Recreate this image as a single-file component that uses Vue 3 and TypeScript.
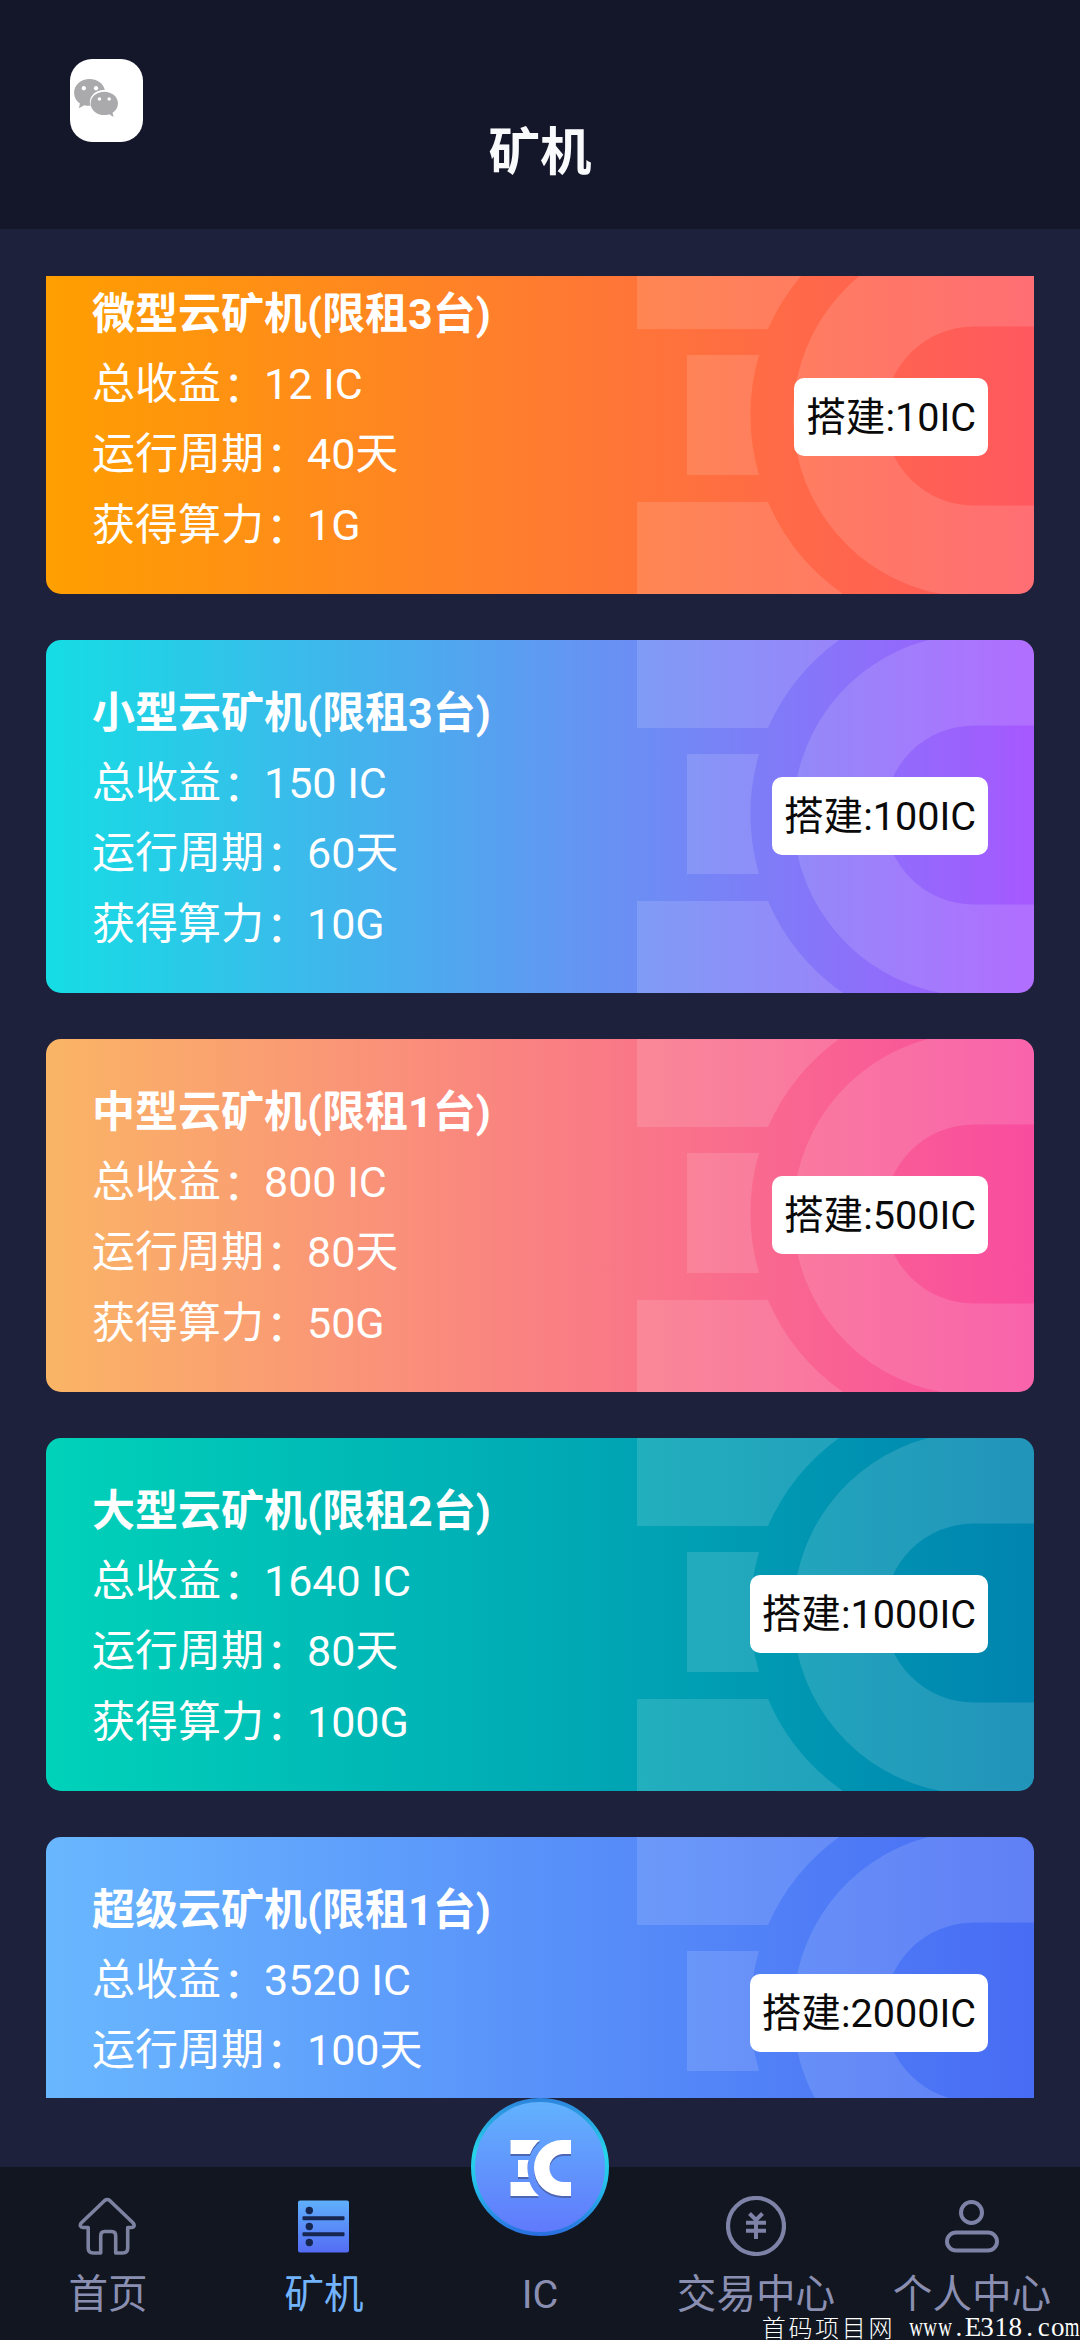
<script setup lang="ts">
interface Miner {
  name: string
  income: string
  days: number
  power?: string
  price: number
  from: string
  to: string
}

const miners: Miner[] = [
  { name: '微型云矿机(限租3台)', income: '12', days: 40, power: '1G', price: 10, from: '#ff9f00', to: '#ff585f' },
  { name: '小型云矿机(限租3台)', income: '150', days: 60, power: '10G', price: 100, from: '#15dde4', to: '#a658ff' },
  { name: '中型云矿机(限租1台)', income: '800', days: 80, power: '50G', price: 500, from: '#fab565', to: '#f94c9f' },
  { name: '大型云矿机(限租2台)', income: '1640', days: 80, power: '100G', price: 1000, from: '#00d2b9', to: '#0084b0' },
  { name: '超级云矿机(限租1台)', income: '3520', days: 100, price: 2000, from: '#69b7ff', to: '#486cf4' },
]

const siteName = '首码项目网'
const siteUrl = 'www.E318.com'
</script>

<template>
  <div class="app">
    <header class="header">
      <div class="chat">
        <svg width="45" height="39" viewBox="0 0 46 40">
          <path
            fill="#aaaaac"
            d="M16 0C7 0 0 6.200 0 14c0 4.800 2.300 8.600 6 11l-1 5 5.500-3.200c2 .6 4 .9 6.500.7C14 19 21 11 31.500 11.200 30 4.500 23.500 0 16 0z"
          />
          <path
            fill="#aaaaac"
            d="M31 13c-7.800 0-14 5.200-14 12s6.200 12 14 12c1.800 0 3.500-.3 5-.9l4.500 2.900-1-4.500c3.400-2.200 5.500-5.500 5.500-9.500 0-6.800-6.200-12-14-12z"
          />
          <g fill="#fff">
            <circle cx="10" cy="9.500" r="2.200" />
            <circle cx="22.500" cy="9.500" r="2.200" />
            <circle cx="26" cy="20.500" r="1.800" />
            <circle cx="36" cy="20.500" r="1.800" />
          </g>
        </svg>
      </div>
      <h1 class="title">矿机</h1>
    </header>

    <main class="main">
      <div class="viewport">
        <div class="list">
          <section
            v-for="m in miners"
            :key="m.name"
            class="card"
            :style="{ backgroundImage: `linear-gradient(90deg, ${m.from}, ${m.to})` }"
          >
            <svg class="pattern" viewBox="0 0 988 353" preserveAspectRatio="none">
              <g fill="#fff" fill-opacity=".135">
                <path d="M591 0H793A217 217 0 0 0 722 88H591Z" />
                <path d="M641 114H713A217 217 0 0 0 713 234H641Z" />
                <path d="M591 261H722A217 217 0 0 0 797 353H591Z" />
                <path d="M988 0H882A181 181 0 0 0 895 353H988V264.500H928A89.500 89.500 0 0 1 928 85.500H988Z" />
              </g>
            </svg>
            <div class="info">
              <h2>{{ m.name }}</h2>
              <p>总收益<i>：</i>{{ m.income }} IC</p>
              <p>运行周期<i>：</i>{{ m.days }}天</p>
              <p v-if="m.power">获得算力<i>：</i>{{ m.power }}</p>
            </div>
            <button class="build">搭建:{{ m.price }}IC</button>
          </section>
        </div>
      </div>
    </main>

    <nav class="nav">
      <a class="tab">
        <svg class="icon" viewBox="0.8 0 60 60" fill="none" stroke="#7d82a0" stroke-width="3.600" stroke-linejoin="round">
          <path d="M27.500 4.500Q30 2.500 32.500 4.500L56 27Q58.500 31 54.500 31.500H50.500V52Q50.500 57 45.500 57H38.500V40Q38.500 35.500 34.500 35.500H27.500Q23.500 35.500 23.500 40V57H16Q11 57 11 52V31.500H6Q1.500 31 4 27Z" />
        </svg>
        <span>首页</span>
      </a>
      <a class="tab active">
        <svg class="icon" viewBox="0 0 60 60">
          <defs>
            <linearGradient id="rack" x1="0" y1="0" x2="0" y2="1">
              <stop offset="0" stop-color="#5fb0fc" />
              <stop offset="1" stop-color="#546cf4" />
            </linearGradient>
          </defs>
          <rect x="4" y="4.500" width="51" height="52" rx="2" fill="url(#rack)" />
          <g fill="#16264f">
            <circle cx="15.300" cy="14.500" r="3.700" />
            <circle cx="15.300" cy="30.500" r="3.700" />
            <circle cx="15.300" cy="46.500" r="3.700" />
            <rect x="8.500" y="20.300" width="42" height="4" rx="1" />
            <rect x="8.500" y="36.300" width="42" height="4" rx="1" />
          </g>
        </svg>
        <span>矿机</span>
      </a>
      <a class="tab">
        <span class="icon"></span>
        <span>IC</span>
        <svg class="coin" viewBox="0 0 140 140">
          <defs>
            <linearGradient id="coin" x1="0" y1="0" x2="0" y2="1">
              <stop offset="0" stop-color="#62b3fe" />
              <stop offset="1" stop-color="#6079fc" />
            </linearGradient>
            <linearGradient id="ring" x1="0" y1="0" x2="0" y2="1">
              <stop offset="0" stop-color="#2d86dd" />
              <stop offset=".4" stop-color="#25d6ea" />
              <stop offset=".6" stop-color="#25c4ea" />
              <stop offset="1" stop-color="#2a70e0" />
            </linearGradient>
            <g id="mark">
              <path d="M40.500 43H70Q63 49 60 57H40.500Z" />
              <path d="M48 63H58.500Q56.500 70 58.500 80H48Z" />
              <path d="M40.500 85H59.500Q62 93 69 99H40.500Z" />
              <path d="M101 43H92A28 28 0 0 0 92 99H101V85H93.500A14 14 0 0 1 93.500 57H101Z" />
            </g>
          </defs>
          <circle cx="70" cy="70" r="67" fill="url(#coin)" stroke="url(#ring)" stroke-width="4" />
          <use href="#mark" y="2" fill="#4c66b4" />
          <use href="#mark" fill="#fff" />
        </svg>
      </a>
      <a class="tab">
        <svg class="icon" viewBox="0 0 60 60" fill="none" stroke="#7d82a6">
          <circle cx="30" cy="30" r="28" stroke-width="4.200" />
          <path d="M23.500 17.500L30 24L36.500 17.500M30 24V43M20 26.700H40M20 34.700H40" stroke-width="4" />
        </svg>
        <span>交易中心</span>
      </a>
      <a class="tab">
        <svg class="icon" viewBox="0 0 60 60" fill="none" stroke="#7d82a6" stroke-width="4">
          <circle cx="29.500" cy="16.500" r="10.500" />
          <rect x="5" y="36.500" width="50" height="18" rx="9" />
        </svg>
        <span>个人中心</span>
      </a>
    </nav>

    <div class="credit">
      <span v-for="(c, i) in siteName" :key="'n' + i" class="han">{{ c }}</span>
      <span class="latin"></span>
      <span v-for="(c, i) in siteUrl" :key="'u' + i" class="latin" :class="{ wide: 'wm'.includes(c) }">{{ c }}</span>
    </div>
  </div>
</template>

<style>
body {
  margin: 0;
  background: #1e213b;
}
</style>

<style scoped>
.app {
  position: relative;
  display: flex;
  flex-direction: column;
  width: 1080px;
  height: 2340px;
  overflow: hidden;
  background: #1e213b;
  font-family: Roboto, "Noto Sans CJK SC", sans-serif;
}
.header {
  display: grid;
  grid-template-columns: 1fr auto 1fr;
  align-items: start;
  flex: none;
  height: 229px;
  background: #141629;
}
.chat {
  display: flex;
  align-items: center;
  box-sizing: border-box;
  width: 73px;
  height: 83px;
  margin: 59px 0 0 70px;
  padding: 0 0 5px 4px;
  border-radius: 22px;
  background: #fff;
}
.title {
  margin: 114px 0 0;
  font-size: 51.500px;
  line-height: 78px;
  font-weight: 700;
  color: #f8fafc;
}
.main {
  flex: 1;
  min-height: 0;
  padding: 47px 46px 69px;
}
.viewport {
  height: 1822px;
  overflow: hidden;
}
.list {
  display: flex;
  flex-direction: column;
  gap: 46px;
  margin-top: -35px;
}
.card {
  position: relative;
  display: flex;
  align-items: flex-start;
  justify-content: space-between;
  flex: none;
  box-sizing: border-box;
  height: 353px;
  padding: 38px 46px 0;
  border-radius: 15px;
  overflow: hidden;
}
.pattern {
  position: absolute;
  inset: 0;
  width: 100%;
  height: 100%;
}
.info {
  position: relative;
  color: #fff;
}
.info h2,
.info p {
  margin: 0;
  font-size: 43px;
  line-height: 70.200px;
  white-space: nowrap;
}
.info h2 {
  font-weight: 700;
}
.info i {
  position: relative;
  top: 3px;
  left: 2px;
  font-style: normal;
}
.build {
  position: relative;
  box-sizing: border-box;
  height: 78px;
  margin-top: 98.500px;
  padding: 2px 12px 0;
  border: 0;
  border-radius: 10px;
  background: #fff;
  color: #0a0a0a;
  font: 400 39.600px/76px Roboto, "Noto Sans CJK SC", sans-serif;
}
.nav {
  display: flex;
  flex: none;
  height: 173px;
  background: #111620;
}
.tab {
  position: relative;
  display: flex;
  flex: 1;
  flex-direction: column;
  align-items: center;
  padding-top: 29px;
  font-size: 39.600px;
  line-height: 58px;
  color: #8a8fb2;
  white-space: nowrap;
}
.active {
  color: #72b3fb;
}
.icon {
  width: 60px;
  height: 60px;
  margin-bottom: 10px;
}
.coin {
  position: absolute;
  top: -70px;
  left: 50%;
  width: 140px;
  height: 140px;
  margin-left: -70px;
}
.credit {
  position: absolute;
  right: 1px;
  bottom: 0;
  display: flex;
  font-size: 24px;
  line-height: 26px;
  color: #fff;
}
.han {
  width: 26.700px;
  font-family: "Noto Sans CJK SC", sans-serif;
  font-weight: 300;
}
.latin {
  display: flex;
  justify-content: center;
  width: 14.150px;
  font-family: "Liberation Serif", serif;
  font-size: 27px;
}
.wide {
  transform: scaleX(0.700);
}
</style>
